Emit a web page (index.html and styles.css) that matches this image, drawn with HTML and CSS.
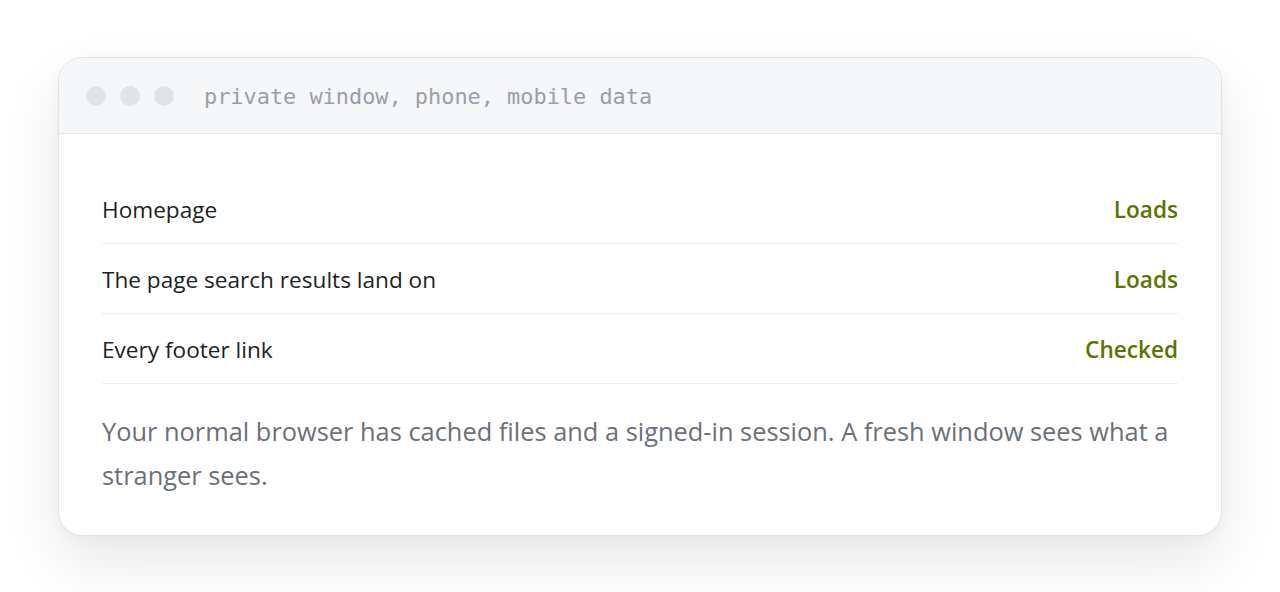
FILE: index.html
```html
<!DOCTYPE html>
<html lang="en">
<head>
<meta charset="utf-8">
<title>Checks</title>
<link rel="stylesheet" href="styles.css">
</head>
<body>
<div class="page">
  <div class="card">
    <div class="bar">
      <div class="dots"><span class="dot"></span><span class="dot"></span><span class="dot"></span></div>
      <div class="label">private window, phone, mobile data</div>
    </div>
    <div class="body">
      <div class="row"><span class="name">Homepage</span><span class="status">Loads</span></div>
      <div class="row"><span class="name">The page search results land on</span><span class="status">Loads</span></div>
      <div class="row"><span class="name">Every footer link</span><span class="status">Checked</span></div>
      <p class="note">Your normal browser has cached files and a signed-in session. A fresh window sees what a stranger sees.</p>
    </div>
  </div>
</div>
</body>
</html>
```
FILE: styles.css
```css
* { box-sizing: border-box; }
html, body { margin: 0; padding: 0; background: #ffffff; }
body { font-family: "Open Sans", "Noto Sans", sans-serif; color: #1f2328; }
.page { padding: 57px 58px 0 58px; min-height: 592px; }
.card {
  border: 1px solid #e1e3e6;
  border-radius: 24px;
  background: #fff;
  overflow: hidden;
  box-shadow: 0 26px 60px rgba(0, 0, 0, 0.09), 0 4px 14px rgba(0, 0, 0, 0.03);
}
.bar {
  height: 76px;
  background: #f6f7f9;
  border-bottom: 1px solid #e3e5e8;
  display: flex;
  align-items: center;
  padding-left: 27px;
}
.dots { display: flex; gap: 14px; }
.dot { width: 20px; height: 20px; border-radius: 50%; background: #e1e3e6; }
.label {
  margin-left: 30px;
  padding-top: 1px;
  font-family: "DejaVu Sans Mono", "Liberation Mono", monospace;
  font-size: 21.9px;
  color: #9a9fa7;
}
.body { padding: 40px 43px 38px 43px; }
.row {
  height: 70px;
  display: flex;
  align-items: center;
  justify-content: space-between;
  border-bottom: 1px solid #eceef0;
  font-size: 22.6px;
  padding-top: 1px;
}
.name { color: #1c1f23; }
.status { color: #5b7600; font-weight: 600; }
.note {
  margin: 25px 0 0 0;
  font-size: 25.4px;
  line-height: 44px;
  color: #6b7079;
}
```
